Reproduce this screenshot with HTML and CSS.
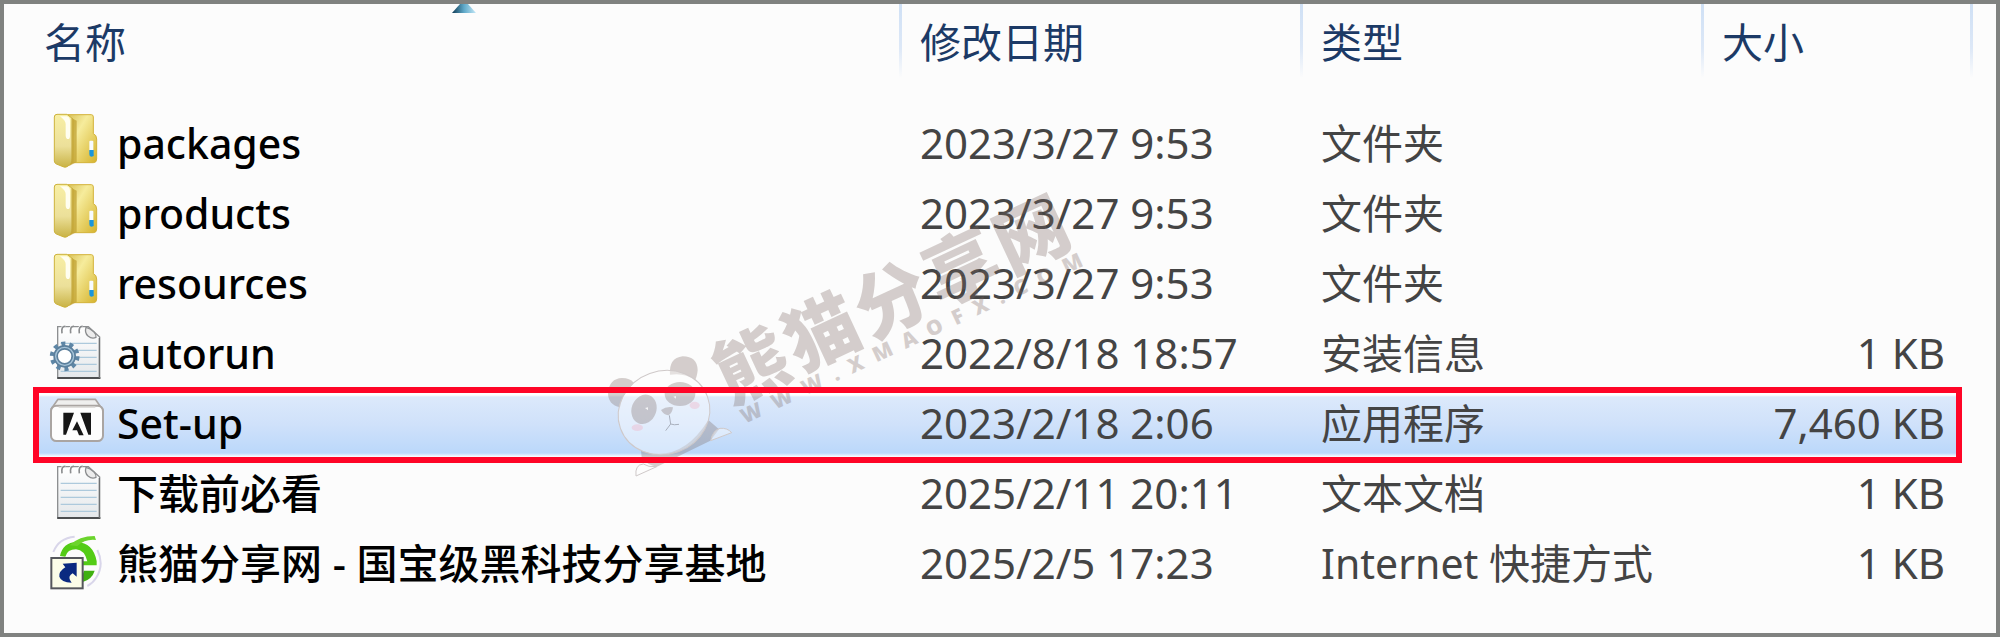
FILE: index.html
```html
<!DOCTYPE html>
<html lang="zh-CN">
  <head>
    <meta charset="UTF-8" />
    <meta name="viewport" content="width=device-width, initial-scale=1.0" />
    <title>Set-up</title>
    <link rel="stylesheet" href="styles.css">
  </head>
  <body>
    <!-- Shared icons -->
    <svg class="defs" width="0" height="0" aria-hidden="true">
      <defs>
        <linearGradient id="folderBack" x1="0" y1="0" x2="1" y2="1">
          <stop offset="0" stop-color="#d9c25a" />
          <stop offset="0.35" stop-color="#f6ec9c" />
          <stop offset="1" stop-color="#d6b32c" />
        </linearGradient>
        <linearGradient id="folderFront" x1="0" y1="0" x2="0" y2="1">
          <stop offset="0" stop-color="#f8efa4" />
          <stop offset="0.6" stop-color="#ece09a" />
          <stop offset="1" stop-color="#c9b346" />
        </linearGradient>
        <linearGradient id="paper" x1="0" y1="0" x2="0" y2="1">
          <stop offset="0" stop-color="#ffffff" />
          <stop offset="1" stop-color="#e4e7ea" />
        </linearGradient>
        <linearGradient id="arrowFill" x1="0" y1="0" x2="1" y2="0">
          <stop offset="0" stop-color="#0f3b55" />
          <stop offset="0.5" stop-color="#5fa9c9" />
          <stop offset="1" stop-color="#c4e8f7" />
        </linearGradient>
      </defs>
      <symbol id="folder" viewBox="24 39 168 192">
        <path d="M84 44h70q6 0 6 7v50q10 4 10 16v60q0 11-10 11H92z" fill="url(#folderBack)" stroke="#d3b23a" stroke-width="3" />
        <path d="M43 51q0-8 8-8h30l18 14v130l-18 13q-6 3-12 0l-20-8q-6-3-6-9z" fill="url(#folderFront)" stroke="#cdb23c" stroke-width="3" />
        <path d="M94 54l16 8v124l-24 13q8-8 8-24z" fill="#c0a233" opacity="0.75" />
        <path d="M60 49h20q10 2 10 14v44q0 10-6 10t-7-10V72q0-10-17-23z" fill="#fffef0" />
        <rect x="148" y="122" width="12" height="30" rx="3" fill="#f7fbff" />
        <path d="M148 150h13v18q-13 6-13-6z" fill="#1996dc" />
      </symbol>
      <symbol id="notepad" viewBox="24 39 168 192">
        <path d="M53 50h92l34 31v123H53z" fill="url(#paper)" stroke="#8d8f91" stroke-width="4" />
        <path d="M52 204h129" stroke="#4c4e50" stroke-width="6" />
        <path d="M178 84v120" stroke="#6e7072" stroke-width="4" />
        <path d="M62 100h108M62 121h108M62 142h108M62 163h108M62 184h108" stroke="#adc9dc" stroke-width="4" />
        <path d="M66 72q-4-24 10-22M92 72q-4-24 10-22M118 72q-4-24 10-22" fill="none" stroke="#fff" stroke-width="10" />
        <path d="M66 70q-3-22 10-21M92 70q-3-22 10-21M118 70q-3-22 10-21" fill="none" stroke="#8b8d8f" stroke-width="5" />
        <path d="M138 52q-5 16 6 26 12 10 24 4 2-8-6-16-12-12-24-14z" fill="#ececec" stroke="#8b8d8f" stroke-width="4" />
      </symbol>
    </svg>

    <div class="explorer">
      <table class="files">
        <colgroup>
          <col>
          <col class="col-date">
          <col class="col-type">
          <col class="col-size">
        </colgroup>
        <thead>
          <tr>
            <th scope="col">名称
              <svg class="sort" viewBox="0 0 24 9" aria-hidden="true"><path d="M8 0h8l8 9H0z" fill="url(#arrowFill)" /></svg>
            </th>
            <th scope="col">修改日期</th>
            <th scope="col">类型</th>
            <th scope="col">大小</th>
          </tr>
        </thead>
        <tbody>
          <tr>
            <td><div class="name"><svg class="icon"><use href="#folder" /></svg>packages</div></td>
            <td class="number">2023/3/27 9:53</td>
            <td>文件夹</td>
            <td></td>
          </tr>
          <tr>
            <td><div class="name"><svg class="icon"><use href="#folder" /></svg>products</div></td>
            <td class="number">2023/3/27 9:53</td>
            <td>文件夹</td>
            <td></td>
          </tr>
          <tr>
            <td><div class="name"><svg class="icon"><use href="#folder" /></svg>resources</div></td>
            <td class="number">2023/3/27 9:53</td>
            <td>文件夹</td>
            <td></td>
          </tr>
          <tr>
            <td>
              <div class="name">
                <svg class="icon" viewBox="24 39 168 192">
                  <use href="#notepad" x="24" y="39" width="168" height="192" />
                  <circle cx="74" cy="139" r="38" fill="none" stroke="#5e86a6" stroke-width="13" stroke-dasharray="12 12" />
                  <circle cx="74" cy="139" r="27" fill="#fff" stroke="#5b7f9c" stroke-width="14" />
                  <circle cx="74" cy="139" r="27" fill="none" stroke="#a5c3d8" stroke-width="4" />
                </svg>autorun
              </div>
            </td>
            <td class="number">2022/8/18 18:57</td>
            <td>安装信息</td>
            <td class="number">1 KB</td>
          </tr>
          <tr class="selected">
            <td>
              <div class="name">
                <svg class="icon" viewBox="24 249 168 192">
                  <path d="M54 268h112l20 28H34z" fill="#efefee" stroke="#aaa5a2" stroke-width="5" stroke-linejoin="round" />
                  <rect x="33" y="287" width="156" height="106" rx="16" fill="#fdfdfd" stroke="#aaa5a2" stroke-width="6" />
                  <path d="M56 291h110" stroke="#d6d3d1" stroke-width="5" />
                  <path d="M70 308h32L78 374h-8zM121 308h32v66h-8z" fill="#161616" />
                  <path d="M111 334l20 42h-14l-6-15H97z" fill="#161616" />
                </svg>Set-up
              </div>
            </td>
            <td class="number">2023/2/18 2:06</td>
            <td>应用程序</td>
            <td class="number">7,460 KB</td>
          </tr>
          <tr>
            <td><div class="name"><svg class="icon"><use href="#notepad" /></svg>下载前必看</div></td>
            <td class="number">2025/2/11 20:11</td>
            <td>文本文档</td>
            <td class="number">1 KB</td>
          </tr>
          <tr>
            <td>
              <div class="name">
                <svg class="icon" viewBox="24 249 168 192">
                  <path d="M40 306q16-42 64-46M172 300q22 44-4 84-10 16-26 24" fill="none" stroke="#d9d6ea" stroke-width="6" />
                  <path d="M60 318q8-40 50-42 50 2 60 58v12h-50v-12h22q-8-34-34-36-26 0-32 22z" fill="#54cc16" />
                  <path d="M88 286q30-28 76-28l4 12q-32-4-56 18z" fill="#6bd42c" />
                  <path d="M132 362h32q-8 26-36 34v-22z" fill="#3fb010" />
                  <rect x="34" y="324" width="94" height="91" fill="#fbfde8" stroke="#55575c" stroke-width="6" />
                  <path d="M68 341l42-3v42l-12-10q-14 8-8 20l5 8q-32-2-37-18-2-16 18-28z" fill="#0a2a80" />
                </svg>熊猫分享网 - 国宝级黑科技分享基地
              </div>
            </td>
            <td class="number">2025/2/5 17:23</td>
            <td>Internet 快捷方式</td>
            <td class="number">1 KB</td>
          </tr>
        </tbody>
      </table>

      <!-- Watermark -->
      <svg class="watermark" viewBox="0 0 1560 930">
        <g class="ink">
          <path d="M355 720l32 28-26 34-160 78q-30-4-46-28l-2-20q120 40 202-92z" />
          <path d="M240 584q-4-50 38-55 44 0 45 42-2 20-8 30-30-24-75-17z" />
          <path d="M90 682q-36-8-36-44 4-42 42-44 24 0 35 14-34 28-41 74z" />
        </g>
        <ellipse class="face" cx="222" cy="698" rx="139" ry="125" transform="rotate(-20 222 698)" />
        <path class="face" d="M362 782q6-32 28-37 22-2 35 13zM138 888q-4-34 22-36 14 10 40 8z" />
        <g class="ink">
          <ellipse cx="162" cy="688" rx="37" ry="45" transform="rotate(20 162 688)" />
          <ellipse cx="270" cy="642" rx="46" ry="36" />
          <path d="M213 690q16-12 36-8-2 18-14 24-14-2-22-16z" />
        </g>
        <path class="line" d="M238 706l4 26-15 20M242 732q10 4 25 1" />
        <path d="M165 684l9-2v9zM250 650l8-2v8z" fill="#fff" opacity="0.8" />
        <ellipse class="cheek" cx="142" cy="743" rx="17" ry="10" />
        <ellipse class="cheek" cx="314" cy="676" rx="15" ry="11" />
        <g class="ink" transform="translate(484 556) rotate(-25)">
          <text class="brand" x="-110" y="80">熊猫分享网</text>
          <text class="site" x="-92" y="151">WWW.XMAOFX.COM</text>
        </g>
      </svg>
    </div>
  </body>
</html>
```
FILE: styles.css
```css
* {
  box-sizing: border-box;
}

body {
  margin: 0;
  background-color: #fcfcfc;
  color: #000;
  font-family: "Noto Sans", "Noto Sans CJK SC", sans-serif;
  font-size: 41px;
  line-height: 60px;
}

.defs {
  position: absolute;
}

.explorer {
  position: relative;
  min-height: 100vh;
  padding: 0 37px 0 32px;
  border: 4px solid #808280;
}

/* File list */
.files {
  width: 100%;
  table-layout: fixed;
  border-spacing: 0;
}

.col-date,
.col-type {
  width: 401px;
}

.col-size {
  width: 257px;
}

.files th {
  position: relative;
  height: 106px;
  padding: 8px 20px 0;
  color: #1c3a66;
  font-weight: 400;
  text-align: left;
  vertical-align: top;
}

.files th:first-child {
  padding-left: 8px;
}

/* Column dividers fade out towards the bottom */
.files th::after {
  content: "";
  position: absolute;
  top: 0;
  right: -2px;
  width: 3px;
  height: 74px;
  background: linear-gradient(#cfe0f5, #dde8f7 60%, #fcfcfc);
}

.files th:last-child::after {
  right: -14px;
}

.sort {
  position: absolute;
  top: 0;
  left: 50%;
  width: 24px;
  height: 9px;
  margin-left: -16px;
}

.files td {
  height: 70px;
  padding: 0 20px 4px;
  color: #444;
  white-space: nowrap;
}

.files td:first-child {
  padding: 0 0 0 12px;
  color: #000;
}

.files td:last-child {
  padding-right: 14px;
  text-align: right;
}

.name {
  display: flex;
  align-items: flex-start;
  gap: 13px;
  font-weight: 500;
}

.files .number {
  font-size: 42px;
}

.icon {
  flex: none;
  width: 56px;
  height: 64px;
}

/* Selected row */
.selected {
  position: relative;
  background: linear-gradient(#fff 5px, #dce9fb 7px, #cfe1fa 50%, #bbd8fa 63px, #fff 67px);
}

.selected td:last-child::after {
  content: "";
  position: absolute;
  inset: -3px;
  z-index: 2;
  border: 6px solid #ff0527;
}

/* Watermark */
.watermark {
  position: absolute;
  top: 176px;
  left: 586px;
  z-index: 1;
  width: 520px;
  height: 310px;
  overflow: visible;
  pointer-events: none;
}

.ink {
  fill: #79655f;
  opacity: 0.3;
}

.face {
  fill: #fff;
  fill-opacity: 0.4;
  stroke: #cfc9c9;
  stroke-width: 3;
}

.line {
  fill: none;
  stroke: #a9b0bd;
  stroke-width: 3;
}

.cheek {
  fill: #f0b4c8;
  opacity: 0.4;
}

.brand {
  font-size: 220px;
  font-weight: 900;
  letter-spacing: 12px;
}

.site {
  font-family: "Open Sans", sans-serif;
  font-size: 62px;
  font-weight: 800;
  letter-spacing: 36px;
}
```
